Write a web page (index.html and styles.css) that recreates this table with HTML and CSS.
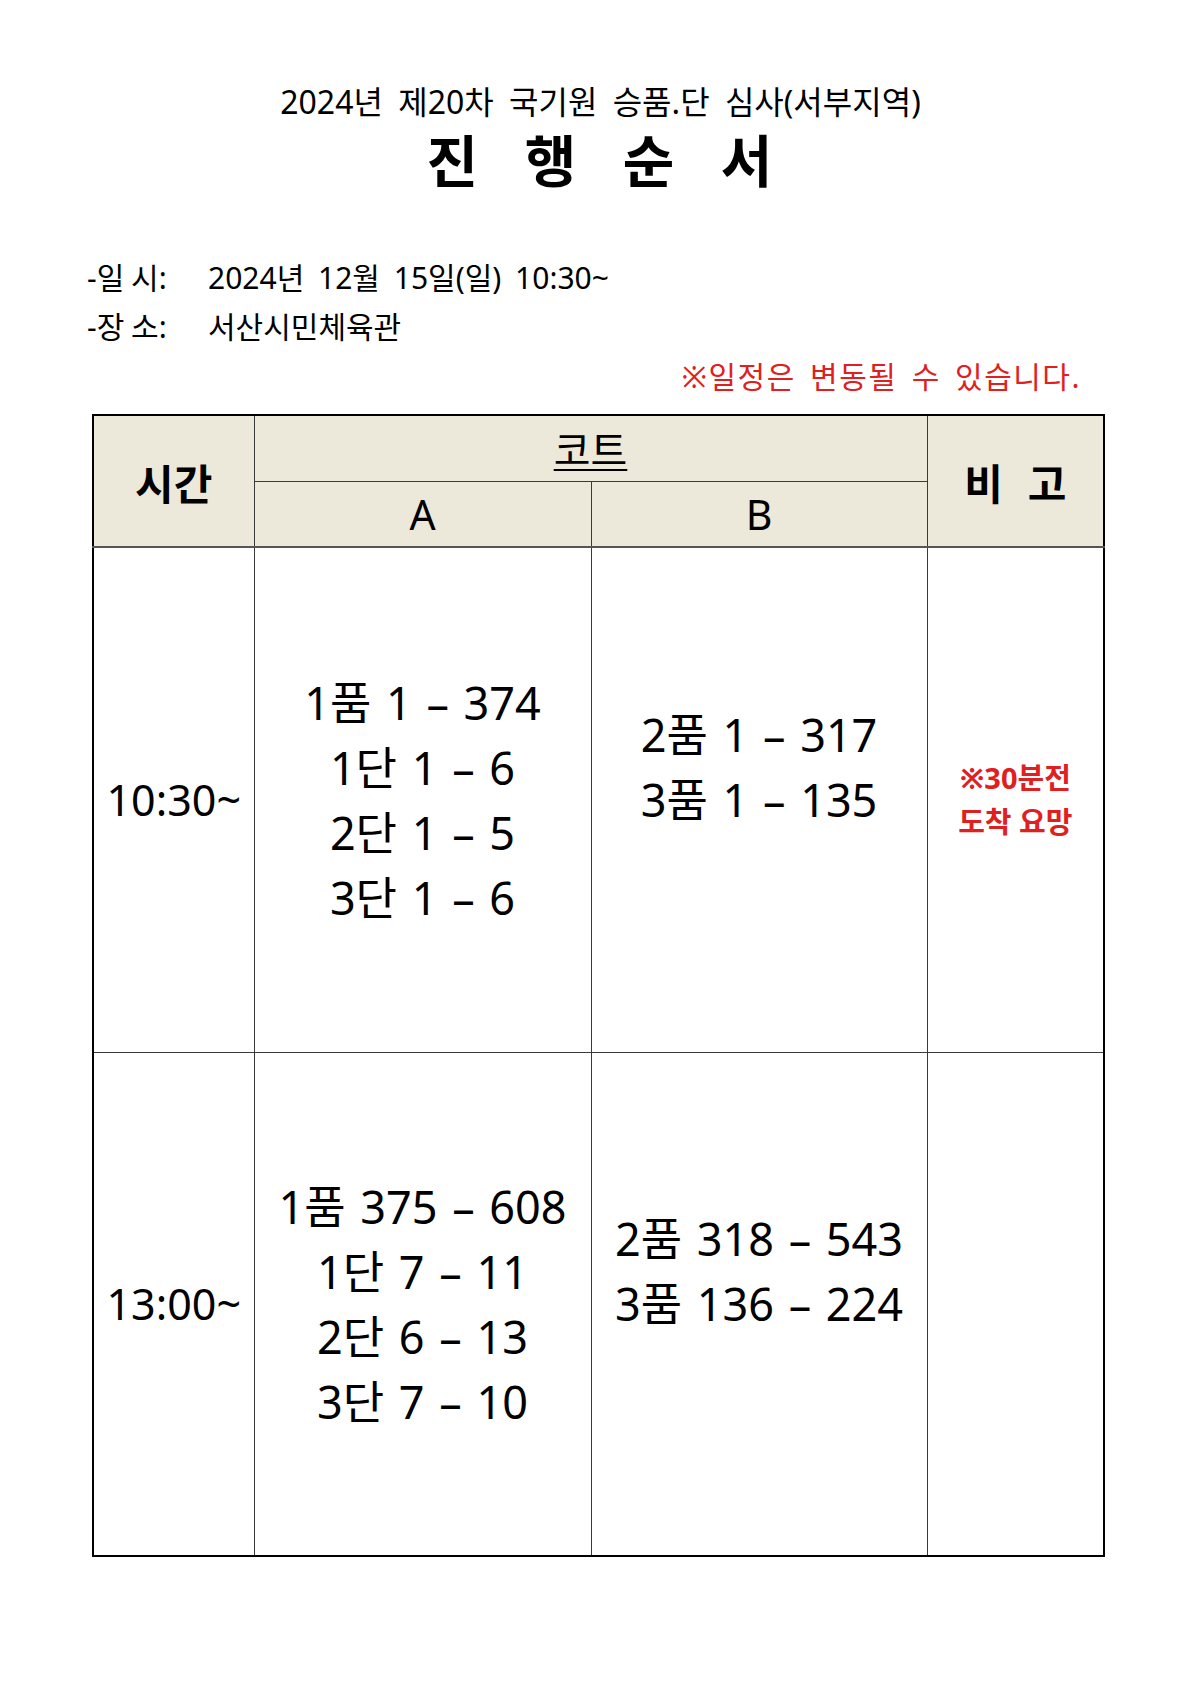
FILE: index.html
```html
<!DOCTYPE html>
<html lang="ko">
<head>
<meta charset="utf-8">
<title>진행순서</title>
<link rel="stylesheet" href="styles.css">
</head>
<body>
<div class="page">
  <h1 class="title-sub">2024년 제20차 국기원 승품.단 심사(서부지역)</h1>
  <h2 class="title-main">진 행 순 서</h2>
  <div class="info">
    <p class="info-line"><span class="label">-일 시:</span><span class="value">2024년 12월 15일(일) 10:30~</span></p>
    <p class="info-line"><span class="label">-장 소:</span><span class="value">서산시민체육관</span></p>
  </div>
  <p class="notice">※일정은 변동될 수 있습니다.</p>
  <table class="schedule">
    <colgroup>
      <col class="c-time">
      <col class="c-a">
      <col class="c-b">
      <col class="c-note">
    </colgroup>
    <thead>
      <tr class="h1">
        <th rowspan="2" class="hd-bold">시간</th>
        <th colspan="2" class="hd-court"><span class="ul">코트</span></th>
        <th rowspan="2" class="hd-bold hd-wide">비 고</th>
      </tr>
      <tr class="h2">
        <th class="hd-reg">A</th>
        <th class="hd-reg">B</th>
      </tr>
    </thead>
    <tbody>
      <tr class="r1">
        <td class="time">10:30~</td>
        <td class="list">
          <div>1품 1 – 374</div>
          <div>1단 1 – 6</div>
          <div>2단 1 – 5</div>
          <div>3단 1 – 6</div>
        </td>
        <td class="list">
          <div>2품 1 – 317</div>
          <div>3품 1 – 135</div>
          <div>&nbsp;</div>
        </td>
        <td class="note">
          <div>※30분전</div>
          <div>도착 요망</div>
        </td>
      </tr>
      <tr class="r2">
        <td class="time">13:00~</td>
        <td class="list">
          <div>1품 375 – 608</div>
          <div>1단 7 – 11</div>
          <div>2단 6 – 13</div>
          <div>3단 7 – 10</div>
        </td>
        <td class="list">
          <div>2품 318 – 543</div>
          <div>3품 136 – 224</div>
          <div>&nbsp;</div>
        </td>
        <td class="note"></td>
      </tr>
    </tbody>
  </table>
</div>
</body>
</html>
```

FILE: styles.css
```css
html, body {
  margin: 0;
  padding: 0;
  background: #ffffff;
}

body {
  font-family: "Noto Sans", "Noto Sans CJK KR", sans-serif;
  color: #000000;
}

.page {
  width: 1199px;
  padding-top: 84px;
  box-sizing: border-box;
}

.title-sub {
  margin: 0;
  text-align: center;
  font-size: 32px;
  font-weight: 400;
  line-height: 36px;
  word-spacing: 7px;
  padding-left: 2px;
}

.title-main {
  margin: 9px 0 0 0;
  text-align: center;
  font-size: 56px;
  font-weight: 700;
  line-height: 62px;
  letter-spacing: 16px;
  padding-left: 16px;
}

.info {
  margin-top: 62px;
  padding-left: 87px;
}

.info-line {
  margin: 0;
  font-size: 30px;
  line-height: 49px;
  white-space: nowrap;
}

.label {
  display: inline-block;
  width: 121px;
  word-spacing: -1px;
}

.value {
  word-spacing: 6px;
}

.notice {
  margin: 2px 0 0 0;
  text-align: right;
  padding-right: 118px;
  font-size: 30px;
  line-height: 48px;
  letter-spacing: 1.5px;
  word-spacing: 5px;
  color: #e02020;
}

.schedule {
  margin-top: 13px;
  margin-left: 92px;
  width: 1011px;
  border-collapse: collapse;
  table-layout: fixed;
  border: 2px solid #000;
}

.c-time { width: 161px; }
.c-a { width: 337px; }
.c-b { width: 336px; }
.c-note { width: 177px; }

.schedule th,
.schedule td {
  border: 1px solid #3a3a3a;
  padding: 0;
  text-align: center;
  vertical-align: middle;
}

.schedule thead th {
  background: #ece8da;
}

.schedule thead tr.h2 th,
.schedule thead th[rowspan] {
  border-bottom: 2px solid #555;
}

.h1, .h2 {
  height: 66px;
}

.hd-bold {
  font-size: 42px;
  font-weight: 700;
}

.hd-wide {
  word-spacing: 14px;
  padding-left: 4px;
}

.hd-court {
  font-size: 40px;
  font-weight: 400;
}

.ul {
  text-decoration: underline;
  text-decoration-thickness: 2px;
  text-underline-offset: 4px;
}

.hd-reg {
  font-size: 41px;
  font-weight: 400;
}

.r1 { height: 505px; }
.r2 { height: 504px; }

.time {
  font-size: 43px;
}

.list {
  font-size: 45px;
  line-height: 65px;
  word-spacing: 3px;
}

.note {
  font-size: 29px;
  font-weight: 700;
  line-height: 44px;
  color: #e02020;
}
```
